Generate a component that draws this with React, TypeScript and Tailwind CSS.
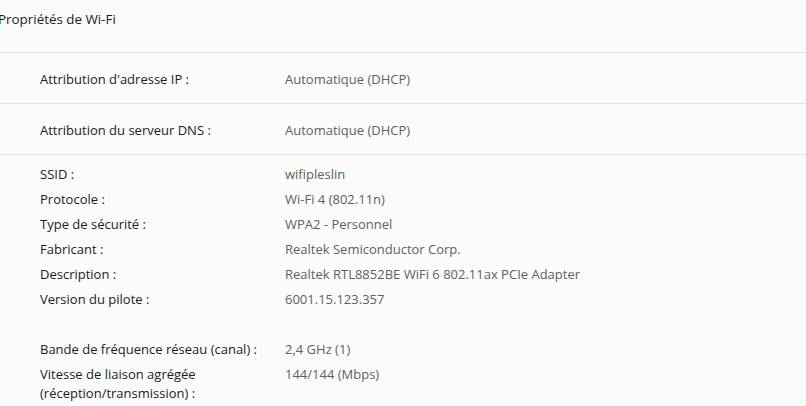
import React from 'react';

type Item = { label: string; value: string };

const details: Item[] = [
  { label: 'SSID :', value: 'wifipleslin' },
  { label: 'Protocole :', value: 'Wi-Fi 4 (802.11n)' },
  { label: 'Type de sécurité :', value: 'WPA2 - Personnel' },
  { label: 'Fabricant :', value: 'Realtek Semiconductor Corp.' },
  { label: 'Description :', value: 'Realtek RTL8852BE WiFi 6 802.11ax PCIe Adapter' },
  { label: 'Version du pilote :', value: '6001.15.123.357' },
];

const Row: React.FC<{ label: React.ReactNode; value: string }> = ({ label, value }) => (
  <div className="flex py-[3px] leading-[19px]">
    <div className="w-[245px] shrink-0 text-[#1b1b1b]">{label}</div>
    <div className="text-[#5f5f5f]">{value}</div>
  </div>
);

export default function App() {
  return (
    <div
      className="w-[806px] h-[406px] overflow-hidden bg-[#fbfbfb] text-[13px]"
      style={{ fontFamily: '"Open Sans", "Noto Sans", sans-serif' }}
    >
      {/* Header */}
      <div className="h-[53px] border-b border-[#e3e3e3] pt-[9px]">
        <span className="ml-[-2px] text-[13.4px] text-[#1b1b1b]">Propriétés de Wi-Fi</span>
      </div>

      {/* IP / DNS settings */}
      <div className="h-[51px] flex items-center pl-[40px] pt-[4px] border-b border-[#e3e3e3]">
        <div className="w-[245px] text-[#1b1b1b]">Attribution d'adresse IP :</div>
        <div className="text-[#5f5f5f]">Automatique (DHCP)</div>
      </div>
      <div className="h-[51px] flex items-center pl-[40px] pt-[4px] border-b border-[#e3e3e3]">
        <div className="w-[245px] text-[#1b1b1b]">Attribution du serveur DNS :</div>
        <div className="text-[#5f5f5f]">Automatique (DHCP)</div>
      </div>

      {/* Adapter details */}
      <div className="pl-[40px] pt-[7px]">
        {details.map((d) => (
          <Row key={d.label} label={d.label} value={d.value} />
        ))}
        <div className="h-[25px]" />
        <Row label="Bande de fréquence réseau (canal) :" value="2,4 GHz (1)" />
        <Row
          label={
            <>
              Vitesse de liaison agrégée
              <br />
              (réception/transmission) :
            </>
          }
          value="144/144 (Mbps)"
        />
      </div>
    </div>
  );
}
